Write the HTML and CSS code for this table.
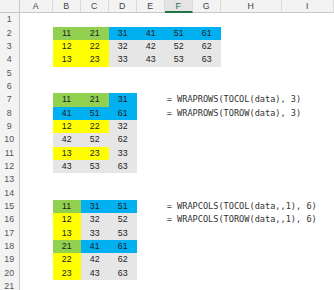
FILE: index.html
```html
<!DOCTYPE html>
<html>
<head>
<meta charset="utf-8">
<link rel="stylesheet" href="styles.css">
</head>
<body>
<div class="sheet">
  <div class="row head">
    <div class="h corner"></div><div class="h">A</div><div class="h">B</div><div class="h">C</div><div class="h">D</div><div class="h">E</div><div class="h sel">F</div><div class="h">G</div><div class="h">H</div><div class="h">I</div>
  </div>
  <div class="row"><div class="r">1</div></div>
  <div class="row"><div class="r">2</div><div class="c"></div><div class="c g">11</div><div class="c g">21</div><div class="c b">31</div><div class="c b">41</div><div class="c b">51</div><div class="c b">61</div></div>
  <div class="row"><div class="r">3</div><div class="c"></div><div class="c y">12</div><div class="c y">22</div><div class="c k">32</div><div class="c k">42</div><div class="c k">52</div><div class="c k">62</div></div>
  <div class="row"><div class="r">4</div><div class="c"></div><div class="c y">13</div><div class="c y">23</div><div class="c k">33</div><div class="c k">43</div><div class="c k">53</div><div class="c k">63</div></div>
  <div class="row"><div class="r">5</div></div>
  <div class="row"><div class="r">6</div></div>
  <div class="row"><div class="r">7</div><div class="c"></div><div class="c g">11</div><div class="c g">21</div><div class="c b">31</div><div class="c"></div><div class="c f">= WRAPROWS(TOCOL(data), 3)</div></div>
  <div class="row"><div class="r">8</div><div class="c"></div><div class="c b">41</div><div class="c b">51</div><div class="c b">61</div><div class="c"></div><div class="c f">= WRAPROWS(TOROW(data), 3)</div></div>
  <div class="row"><div class="r">9</div><div class="c"></div><div class="c y">12</div><div class="c y">22</div><div class="c k">32</div></div>
  <div class="row"><div class="r">10</div><div class="c"></div><div class="c k">42</div><div class="c k">52</div><div class="c k">62</div></div>
  <div class="row"><div class="r">11</div><div class="c"></div><div class="c y">13</div><div class="c y">23</div><div class="c k">33</div></div>
  <div class="row"><div class="r">12</div><div class="c"></div><div class="c k">43</div><div class="c k">53</div><div class="c k">63</div></div>
  <div class="row"><div class="r">13</div></div>
  <div class="row"><div class="r">14</div></div>
  <div class="row"><div class="r">15</div><div class="c"></div><div class="c g">11</div><div class="c b">31</div><div class="c b">51</div><div class="c"></div><div class="c f">= WRAPCOLS(TOCOL(data,,1), 6)</div></div>
  <div class="row"><div class="r">16</div><div class="c"></div><div class="c y">12</div><div class="c k">32</div><div class="c k">52</div><div class="c"></div><div class="c f">= WRAPCOLS(TOROW(data,,1), 6)</div></div>
  <div class="row"><div class="r">17</div><div class="c"></div><div class="c y">13</div><div class="c k">33</div><div class="c k">53</div></div>
  <div class="row"><div class="r">18</div><div class="c"></div><div class="c g">21</div><div class="c b">41</div><div class="c b">61</div></div>
  <div class="row"><div class="r">19</div><div class="c"></div><div class="c y">22</div><div class="c k">42</div><div class="c k">62</div></div>
  <div class="row"><div class="r">20</div><div class="c"></div><div class="c y">23</div><div class="c k">43</div><div class="c k">63</div></div>
  <div class="row"><div class="r">21</div></div>
</div>
</body>
</html>
```
FILE: styles.css
```css
html, body {
  margin: 0;
  padding: 0;
  background: #ffffff;
}
body {
  width: 334px;
  height: 290px;
  overflow: hidden;
  font-family: "Liberation Sans", Arial, sans-serif;
}
.sheet {
  display: flex;
  flex-direction: column;
  width: 334px;
}
.row {
  display: grid;
  grid-template-columns: 19.5px 33.2px repeat(6, 28px) 61px minmax(0, 1fr);
  height: 13.333px;
}
.row > div {
  box-sizing: border-box;
  height: 13.333px;
  line-height: 13.333px;
  white-space: nowrap;
}
.h {
  background: #f3f3f3;
  color: #444;
  font-size: 8.8px;
  text-align: center;
  border-right: 1px solid #dadada;
  border-bottom: 1px solid #c8c8c8;
}
.h.sel {
  background: #e4e4e4;
  color: #217346;
  border-bottom: 2px solid #217346;
  line-height: 12.5px;
}
.corner {
  border-right: 1px solid #c8c8c8;
}
.r {
  background: #f3f3f3;
  color: #555;
  font-size: 8.8px;
  text-align: center;
  border-right: 1px solid #c8c8c8;
}
.c {
  font-size: 8.8px;
  color: #222;
  text-align: center;
}
.g { background: #92d050; }
.y { background: #ffff00; }
.b { background: #00b0f0; }
.k { background: #e7e6e6; }
.f {
  text-align: left;
  padding-left: 2px;
  overflow: visible;
  font-family: "DejaVu Sans Mono", "Liberation Mono", monospace;
  font-size: 8.6px;
  color: #333;
}
```
